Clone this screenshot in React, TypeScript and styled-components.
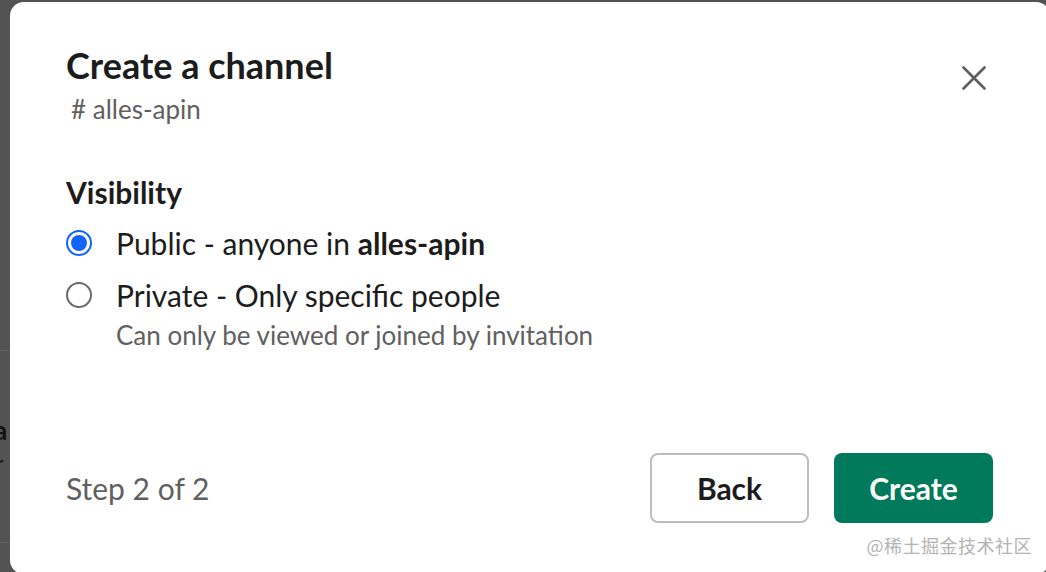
import styled, { createGlobalStyle } from 'styled-components';

const GlobalStyle = createGlobalStyle`
  html, body {
    margin: 0;
    padding: 0;
    overflow: hidden;
    background: #535353;
  }
  * {
    box-sizing: border-box;
  }
`;

const Page = styled.div`
  display: flex;
  width: 1046px;
  height: 572px;
  padding-top: 2px;
  background: #535353;
  overflow: hidden;
  position: relative;
  font-family: Lato, 'Noto Sans', sans-serif;
`;

const BehindStrip = styled.div`
  width: 10px;
  flex-shrink: 0;
  overflow: hidden;
  display: flex;
  flex-direction: column;
  padding-top: 348px;
  color: #1a1a1a;
  white-space: nowrap;
`;

const StripDivider = styled.div<{ $gap: number }>`
  height: 1px;
  background: #626262;
  margin-bottom: ${({ $gap }) => $gap}px;
`;

const StripText = styled.div<{ $bold?: boolean }>`
  font-size: 26px;
  line-height: 34px;
  font-weight: ${({ $bold }) => ($bold ? 700 : 400)};
  margin-left: -6px;
  color: ${({ $bold }) => ($bold ? '#111' : '#222')};
`;

const Modal = styled.div`
  position: relative;
  flex-shrink: 0;
  width: 1040px;
  height: 572px;
  background: #fff;
  border-radius: 14px;
  display: flex;
  flex-direction: column;
  padding: 42px 57px 51px 56px;
`;

const Header = styled.div`
  display: flex;
  justify-content: space-between;
  align-items: flex-start;
`;

const Title = styled.h1`
  margin: 0;
  font-size: 36px;
  line-height: 42px;
  font-weight: 700;
  color: #1d1c1d;
`;

const ChannelName = styled.div`
  margin-top: 8px;
  padding-left: 5px;
  font-size: 26px;
  line-height: 30px;
  color: #616061;
`;

const CloseButton = styled.button`
  width: 44px;
  height: 44px;
  margin-top: 12px;
  margin-right: -3px;
  border: none;
  background: transparent;
  display: flex;
  align-items: center;
  justify-content: center;
  padding: 0;
  cursor: pointer;
`;

const Section = styled.div`
  margin-top: 50px;
  display: flex;
  flex-direction: column;
`;

const Label = styled.div`
  font-size: 30px;
  line-height: 36px;
  font-weight: 700;
  color: #1d1c1d;
  margin-bottom: 15px;
`;

const Option = styled.label`
  display: flex;
  align-items: flex-start;
  gap: 24px;
  margin-bottom: 16px;
  cursor: pointer;
`;

const Radio = styled.span<{ $checked?: boolean }>`
  width: 26px;
  height: 26px;
  margin-top: 5px;
  flex-shrink: 0;
  border-radius: 50%;
  border: 2px solid ${({ $checked }) => ($checked ? '#1264f5' : '#6b6a6b')};
  display: flex;
  align-items: center;
  justify-content: center;

  &::after {
    content: '';
    width: 16px;
    height: 16px;
    border-radius: 50%;
    background: ${({ $checked }) => ($checked ? '#1264f5' : 'transparent')};
  }
`;

const OptionText = styled.div`
  display: flex;
  flex-direction: column;
`;

const OptionTitle = styled.div`
  font-size: 30px;
  line-height: 36px;
  color: #1d1c1d;

  b {
    font-weight: 700;
  }
`;

const OptionHint = styled.div`
  margin-top: 7px;
  font-size: 26px;
  line-height: 30px;
  color: #616061;
`;

const Footer = styled.div`
  margin-top: auto;
  display: flex;
  align-items: center;
  justify-content: space-between;
`;

const StepText = styled.div`
  font-size: 30px;
  color: #616061;
`;

const Buttons = styled.div`
  display: flex;
  gap: 25px;
`;

const Button = styled.button<{ $primary?: boolean }>`
  width: 159px;
  height: 70px;
  border-radius: 8px;
  font-family: Lato, 'Noto Sans', sans-serif;
  font-size: 30px;
  font-weight: 700;
  cursor: pointer;
  border: ${({ $primary }) => ($primary ? 'none' : '2px solid #bdbdbd')};
  background: ${({ $primary }) => ($primary ? '#007a5a' : '#fff')};
  color: ${({ $primary }) => ($primary ? '#fff' : '#1d1c1d')};
`;

const Watermark = styled.div`
  position: absolute;
  right: 18px;
  bottom: 16px;
  font-family: 'Noto Sans CJK SC', sans-serif;
  font-size: 18px;
  color: #b3b3b3;
  letter-spacing: 0.5px;
`;

export default function App() {
  return (
    <Page>
      <GlobalStyle />
      <BehindStrip>
        <StripDivider $gap={62} />
        <StripText $bold>a</StripText>
        <StripText>r</StripText>
        <div style={{ height: 61 }} />
        <StripDivider $gap={0} />
      </BehindStrip>
      <Modal>
        <Header>
          <div>
            <Title>Create a channel</Title>
            <ChannelName># alles-apin</ChannelName>
          </div>
          <CloseButton aria-label="Close">
            <svg width="24" height="24" viewBox="0 0 24 24">
              <path
                d="M1.5 1.5 L22.5 22.5 M22.5 1.5 L1.5 22.5"
                stroke="#5e5e5e"
                strokeWidth="2.6"
                strokeLinecap="round"
              />
            </svg>
          </CloseButton>
        </Header>

        <Section>
          <Label>Visibility</Label>
          <Option>
            <Radio $checked />
            <OptionText>
              <OptionTitle>
                Public - anyone in <b>alles-apin</b>
              </OptionTitle>
            </OptionText>
          </Option>
          <Option>
            <Radio />
            <OptionText>
              <OptionTitle>Private - Only specific people</OptionTitle>
              <OptionHint>Can only be viewed or joined by invitation</OptionHint>
            </OptionText>
          </Option>
        </Section>

        <Footer>
          <StepText>Step 2 of 2</StepText>
          <Buttons>
            <Button>Back</Button>
            <Button $primary>Create</Button>
          </Buttons>
        </Footer>
        <Watermark>@稀土掘金技术社区</Watermark>
      </Modal>
    </Page>
  );
}
